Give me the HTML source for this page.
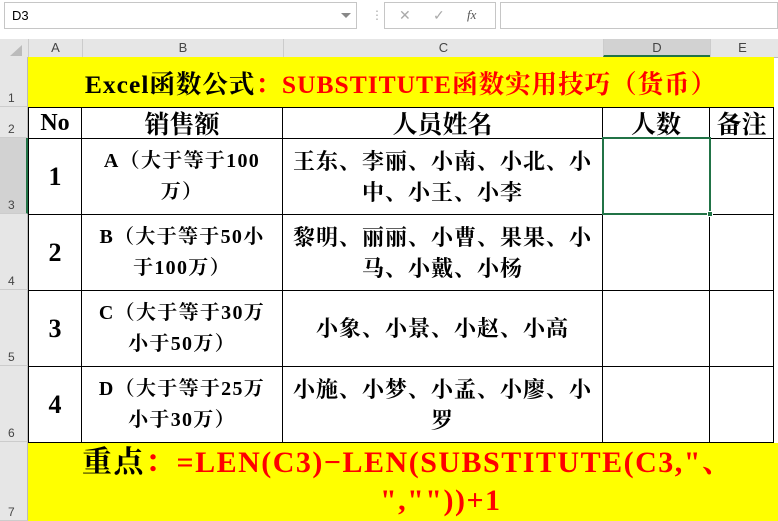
<!DOCTYPE html>
<html><head><meta charset="utf-8"><style>
*{margin:0;padding:0;box-sizing:border-box}
body{width:778px;height:521px;overflow:hidden;background:#fff;position:relative;font-family:"Liberation Serif","Noto Serif CJK SC",serif}
.a{position:absolute}
.hd{font-family:"Liberation Sans",sans-serif;font-size:13px;color:#444;background:#e6e6e6;text-align:center}
.c{position:absolute;display:flex;align-items:center;justify-content:center;text-align:center;font-weight:bold;color:#000;border-right:1px solid #000;border-bottom:1px solid #000}
.rn{position:absolute;left:0;width:28px;font-family:"Liberation Sans",sans-serif;font-size:12px;color:#444;background:#e6e6e6;border-bottom:1px solid #ccc;border-right:1px solid #bbb;padding-left:8px;display:flex;align-items:flex-end;padding-bottom:1px}
.red{color:#f00}
.b{font-size:20px;line-height:31px;padding:0 2px;letter-spacing:1.3px;white-space:nowrap}
.n{font-size:22px;line-height:31px;padding:0 1px;letter-spacing:1px;white-space:nowrap}
</style></head><body>
<div class="a" style="left:0;top:0;width:778px;height:39px;background:#fff"></div>
<div class="a" style="left:4px;top:2px;width:353px;height:27px;border:1px solid #c6c6c6;font-family:'Liberation Sans',sans-serif;font-size:13px;padding:5px 7px">D3</div>
<div class="a" style="left:341px;top:13px;width:0;height:0;border-left:5px solid transparent;border-right:5px solid transparent;border-top:5px solid #888"></div>
<div class="a" style="left:371px;top:8px;color:#aaa;font-size:12px;font-family:'Liberation Sans'">⋮</div>
<div class="a" style="left:384px;top:2px;width:112px;height:27px;border:1px solid #c6c6c6;font-family:'Liberation Sans';color:#aaa;font-size:14px"><span class="a" style="left:14px;top:4px">✕</span><span class="a" style="left:48px;top:4px">✓</span><span class="a" style="left:82px;top:4px;font-family:'Liberation Serif';font-style:italic;color:#555;font-size:13px">fx</span></div>
<div class="a" style="left:500px;top:2px;width:278px;height:27px;border:1px solid #c6c6c6"></div>
<div class="a" style="left:0;top:39px;width:778px;height:19px;background:#e6e6e6;border-bottom:1px solid #bbb"></div>
<div class="a" style="left:10px;top:45px;width:0;height:0;border-left:12px solid transparent;border-bottom:11px solid #bbb"></div>
<div class="a hd" style="left:28px;top:39px;width:54px;height:18px;line-height:18px;border-left:1px solid #ccc">A</div>
<div class="a hd" style="left:82px;top:39px;width:201px;height:18px;line-height:18px;border-left:1px solid #ccc">B</div>
<div class="a hd" style="left:283px;top:39px;width:320px;height:18px;line-height:18px;border-left:1px solid #ccc">C</div>
<div class="a hd" style="left:603px;top:39px;width:107px;height:18px;line-height:18px;border-left:1px solid #ccc;background:#d2d2d2;border-bottom:2px solid #217346">D</div>
<div class="a hd" style="left:710px;top:39px;width:64px;height:18px;line-height:18px;border-left:1px solid #ccc">E</div>
<div class="rn" style="top:57px;height:50px">1</div>
<div class="rn" style="top:107px;height:31px">2</div>
<div class="rn" style="top:138px;height:76px;background:#d2d2d2;border-right:2px solid #217346">3</div>
<div class="rn" style="top:214px;height:76px">4</div>
<div class="rn" style="top:290px;height:76px">5</div>
<div class="rn" style="top:366px;height:76px">6</div>
<div class="rn" style="top:442px;height:79px">7</div>
<div class="c" style="left:28px;top:57px;width:746px;height:51px;background:#ff0;font-size:25.5px;letter-spacing:1px;border-right:none;white-space:nowrap;padding-top:2px">Excel函数公式<span class="red">：SUBSTITUTE函数实用技巧（货币）</span></div>
<div class="a" style="left:28px;top:107px;width:746px;height:1px;background:#000"></div>
<div class="c" style="left:28px;top:108px;width:54px;height:31px;font-size:24px;border-left:1px solid #000">No</div>
<div class="c" style="left:82px;top:108px;width:201px;height:31px;font-size:25px">销售额</div>
<div class="c" style="left:283px;top:108px;width:320px;height:31px;font-size:25px">人员姓名</div>
<div class="c" style="left:603px;top:108px;width:107px;height:31px;font-size:25px">人数</div>
<div class="c" style="left:710px;top:108px;width:64px;height:31px;font-size:25px">备注</div>
<div class="c" style="left:28px;top:139px;width:54px;height:76px;font-size:26px;border-left:1px solid #000">1</div>
<div class="c b" style="left:82px;top:139px;width:201px;height:76px">A（大于等于100<br>万）</div>
<div class="c n" style="left:283px;top:139px;width:320px;height:76px">王东、李丽、小南、小北、小<br>中、小王、小李</div>
<div class="c" style="left:603px;top:139px;width:107px;height:76px"></div>
<div class="c" style="left:710px;top:139px;width:64px;height:76px"></div>
<div class="c" style="left:28px;top:215px;width:54px;height:76px;font-size:26px;border-left:1px solid #000">2</div>
<div class="c b" style="left:82px;top:215px;width:201px;height:76px">B（大于等于50小<br>于100万）</div>
<div class="c n" style="left:283px;top:215px;width:320px;height:76px">黎明、丽丽、小曹、果果、小<br>马、小戴、小杨</div>
<div class="c" style="left:603px;top:215px;width:107px;height:76px"></div>
<div class="c" style="left:710px;top:215px;width:64px;height:76px"></div>
<div class="c" style="left:28px;top:291px;width:54px;height:76px;font-size:26px;border-left:1px solid #000">3</div>
<div class="c b" style="left:82px;top:291px;width:201px;height:76px">C（大于等于30万<br>小于50万）</div>
<div class="c n" style="left:283px;top:291px;width:320px;height:76px">小象、小景、小赵、小高</div>
<div class="c" style="left:603px;top:291px;width:107px;height:76px"></div>
<div class="c" style="left:710px;top:291px;width:64px;height:76px"></div>
<div class="c" style="left:28px;top:367px;width:54px;height:76px;font-size:26px;border-left:1px solid #000">4</div>
<div class="c b" style="left:82px;top:367px;width:201px;height:76px">D（大于等于25万<br>小于30万）</div>
<div class="c n" style="left:283px;top:367px;width:320px;height:76px">小施、小梦、小孟、小廖、小<br>罗</div>
<div class="c" style="left:603px;top:367px;width:107px;height:76px"></div>
<div class="c" style="left:710px;top:367px;width:64px;height:76px"></div>
<div class="a" style="left:28px;top:443px;width:750px;height:78px;background:#ff0"></div>
<div class="a" style="left:82px;top:444px;font-size:30px;font-weight:bold;letter-spacing:1.5px;line-height:38px;white-space:nowrap">重点<span style="color:#f00">：=LEN(C3)−LEN(SUBSTITUTE(C3,"、</span></div>
<div class="a" style="left:380px;top:482px;font-size:30px;font-weight:bold;letter-spacing:1.5px;line-height:38px;white-space:nowrap;color:#f00">",""))+1</div>
<div class="a" style="left:602px;top:137px;width:109px;height:78px;border:2px solid #217346"></div>
<div class="a" style="left:707px;top:211px;width:6px;height:6px;background:#217346;border:1px solid #fff"></div>
</body></html>
